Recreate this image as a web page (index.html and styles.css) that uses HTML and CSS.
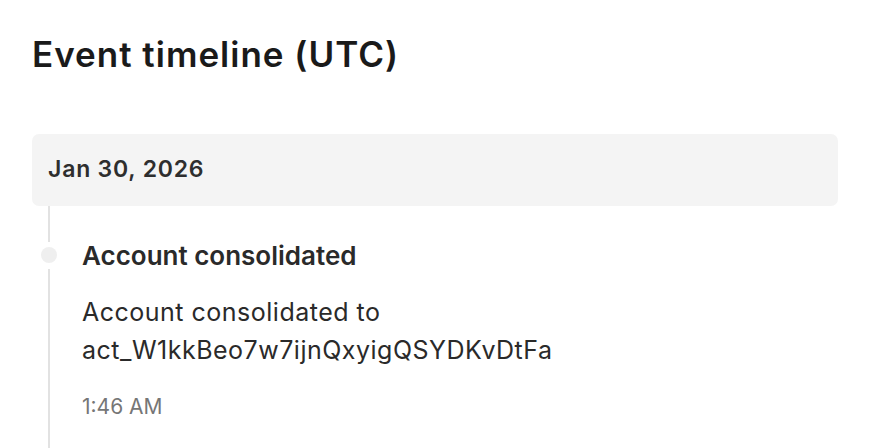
FILE: index.html
```html
<!DOCTYPE html>
<html>
<head>
<meta charset="utf-8">
<link rel="stylesheet" href="styles.css">
</head>
<body>
<main class="page">
  <h1 class="title">Event timeline (UTC)</h1>
  <section class="day">
    <div class="day-header">Jan 30, 2026</div>
    <ol class="timeline">
      <li class="event">
        <div class="marker">
          <span class="seg seg-top"></span>
          <span class="dot"></span>
          <span class="seg seg-bottom"></span>
        </div>
        <div class="event-body">
          <h2 class="event-title">Account consolidated</h2>
          <p class="event-desc">Account consolidated to<br>act_W1kkBeo7w7ijnQxyigQSYDKvDtFa</p>
          <p class="event-time">1:46 AM</p>
        </div>
      </li>
    </ol>
  </section>
</main>
</body>
</html>
```

FILE: styles.css
```css
* { box-sizing: border-box; }
html, body { margin: 0; padding: 0; background: #ffffff; }
body {
  font-family: Inter, "Liberation Sans", sans-serif;
  color: #1f1f1f;
  height: 448px;
  overflow: hidden;
}
.page {
  padding: 28px 32px 0 32px;
}
.title {
  margin: 0;
  font-size: 35px;
  line-height: 52px;
  font-weight: 600;
  letter-spacing: 1px;
  color: #1a1a1a;
}
.day {
  margin-top: 54px;
}
.day-header {
  width: 806px;
  height: 72px;
  background: #f4f4f4;
  border-radius: 7px;
  padding: 0 16px 3px;
  display: flex;
  align-items: center;
  font-size: 23px;
  line-height: 24px;
  font-weight: 600;
  color: #2e2e2e;
  letter-spacing: 0.8px;
}
.timeline {
  list-style: none;
  margin: 0;
  padding: 0 0 0 9px;
}
.event {
  display: flex;
  gap: 25px;
  min-height: 260px;
}
.marker {
  width: 16px;
  display: flex;
  flex-direction: column;
  align-items: center;
}
.seg {
  width: 2px;
  background: #e2e2e2;
}
.seg-top { height: 36px; }
.dot {
  width: 16px;
  height: 16px;
  border-radius: 50%;
  background: #efefef;
  margin: 5px 0 6px;
}
.seg-bottom { flex: 1; }
.event-body {
  padding-top: 35px;
}
.event-title {
  margin: 0;
  font-size: 26px;
  line-height: 30px;
  font-weight: 600;
  color: #2a2a2a;
}
.event-desc {
  margin: 22px 0 0;
  font-size: 25px;
  line-height: 38px;
  color: #2a2a2a;
  letter-spacing: 0.5px;
}
.event-time {
  margin: 26px 0 0;
  font-size: 21px;
  line-height: 24px;
  color: #767676;
}
```
